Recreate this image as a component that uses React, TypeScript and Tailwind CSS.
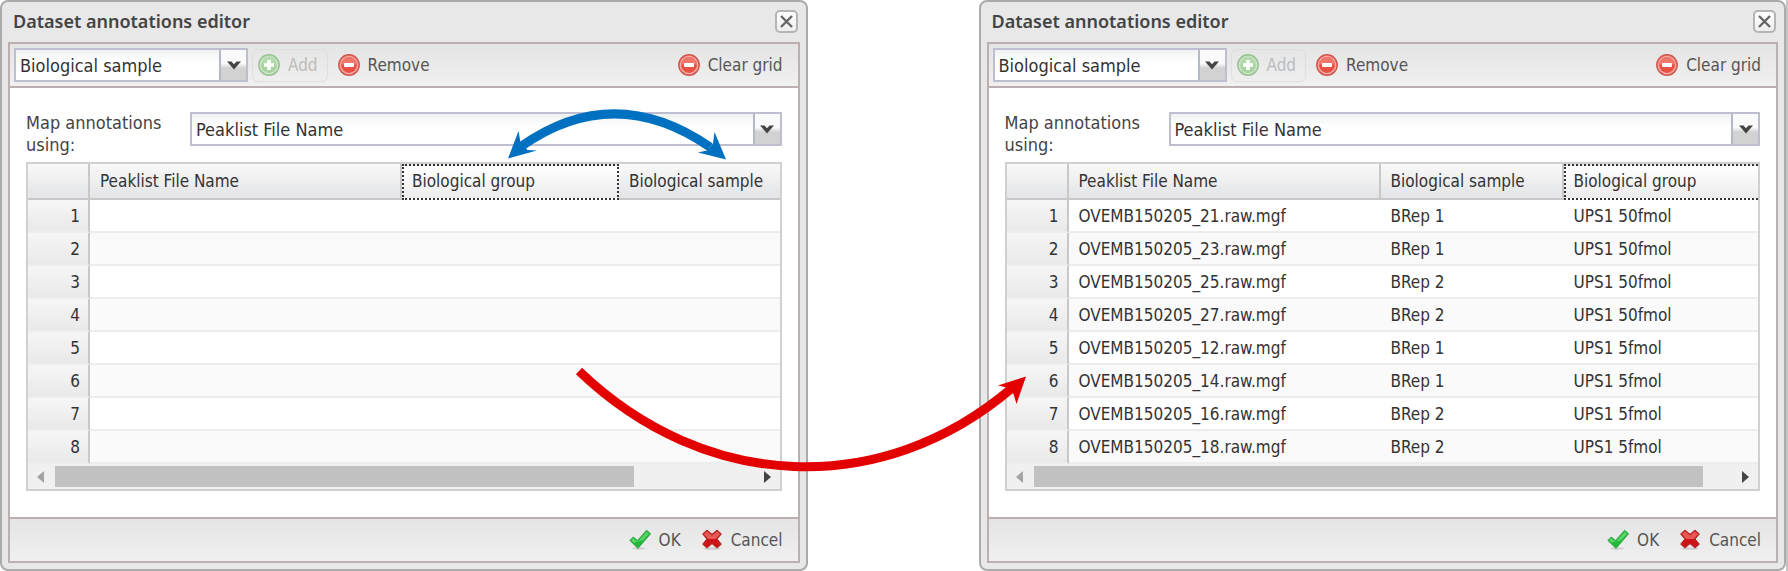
import type { ReactNode } from "react";

type Column = { title: string; width: string; focused?: boolean };
type GridRow = [string, string, string];

function AddIcon() {
  return (
    <svg width="22" height="22" viewBox="0 0 22 22" aria-hidden="true">
      <circle cx="11" cy="11" r="10.3" fill="#a9d2a4" stroke="#94c291" strokeWidth="1.2" />
      <circle cx="11" cy="11" r="8.6" fill="#a8d3a0" stroke="#cbe6c6" strokeWidth="1.4" />
      <path d="M2.8 10.5a8.2 8.2 0 0 1 16.4 0z" fill="#b9dcb3" opacity="0.7" />
      <path d="M9.2 6h3.6v3.2H16v3.6h-3.2V16H9.2v-3.2H6V9.2h3.2z" fill="#fff" />
    </svg>
  );
}

function RemoveIcon() {
  return (
    <svg width="22" height="22" viewBox="0 0 22 22" aria-hidden="true">
      <circle cx="11" cy="11" r="10.3" fill="#e0645a" stroke="#d0564d" strokeWidth="1.2" />
      <circle cx="11" cy="11" r="8.6" fill="#ea4f44" stroke="#f5b0a9" strokeWidth="1.3" />
      <path d="M3.2 10.5a7.8 7.8 0 0 1 15.6 0z" fill="#f28277" opacity="0.75" />
      <rect x="6" y="9" width="10" height="4" rx="0.8" fill="#fff" />
    </svg>
  );
}

function CheckIcon() {
  return (
    <svg width="22" height="22" viewBox="0 0 22 22" aria-hidden="true">
      <ellipse cx="10" cy="19.5" rx="7" ry="1.2" fill="#000" opacity="0.13" />
      <path d="M0.8 11.4 4.2 8l4.4 3.4L17.6 1.2l4 3.6L9 19.4z" fill="#22b83a" stroke="#2fa03d" strokeWidth="0.8" strokeLinejoin="round" />
      <path d="M2.2 11.3 4.2 9.3l4.5 3.6 9-10.2 2.2 2L14 11.3c-4 1.2-7 2.2-9.5 2.2z" fill="#6fdc77" opacity="0.75" />
    </svg>
  );
}

function CrossIcon() {
  return (
    <svg width="22" height="22" viewBox="0 0 22 22" aria-hidden="true">
      <ellipse cx="11" cy="19.6" rx="9" ry="1.2" fill="#000" opacity="0.13" />
      <path d="M6 1l5 4.200L16 1l4.400 3.900-4.200 5.100 4.200 5.200-4.400 3.900-5-4.400-5 4.400-4.400-3.900L5.800 10 1.600 4.900z" fill="#cc1416" stroke="#a82424" strokeWidth="0.9" strokeLinejoin="round" />
      <path d="M6 2.300l5 4.300 5-4.300 3.100 2.700-4.200 5H7.100l-4.200-5z" fill="#ee6a66" opacity="0.8" />
    </svg>
  );
}

function ComboBox({ id, value, className, label }: { id: string; value: string; className: string; label?: string }) {
  return (
    <div className={"relative flex h-[34px] border-2 border-[#bdbfd0] bg-white " + className}>
      <select
        id={id}
        aria-label={label}
        className="min-w-0 flex-1 appearance-none bg-linear-to-b from-[#eef1f1] to-white to-40% pt-[2px] pl-[4px] text-[18px] leading-7 text-[#333] outline-none"
      >
        <option>{value}</option>
      </select>
      <span className="pointer-events-none flex w-[27px] items-center justify-center border-l-2 border-[#b5b8c8] bg-linear-to-b from-[#fafafa] from-45% to-[#d2d2d2] to-60%">
        <svg width="14" height="9" viewBox="0 0 14 9" aria-hidden="true">
          <path d="M0 0.500h4.500L7 3.300 9.500 0.500H14L7 8.500z" fill="#444" />
        </svg>
      </span>
    </div>
  );
}

function ToolButton({ icon, children, disabled }: { icon: ReactNode; children: ReactNode; disabled?: boolean }) {
  return (
    <button
      type="button"
      disabled={disabled}
      className="flex h-[33px] items-center gap-2 rounded-md border border-transparent px-[5px] text-[17px] leading-6 text-[#555] disabled:border-[#dedede] disabled:text-[#bcbcbc]"
    >
      {icon}
      <span className="pr-1">{children}</span>
    </button>
  );
}

function AnnotationsGrid({ columns, rows, thumb }: { columns: Column[]; rows: GridRow[]; thumb: string }) {
  return (
    <div className="overflow-hidden border-2 border-[#d0d0d0]">
      <table className="w-full table-fixed border-separate border-spacing-0 text-[17px] leading-6">
        <colgroup>
          <col className="w-[62px]" />
          {columns.map((c) => (
            <col key={c.title} className={c.width} />
          ))}
        </colgroup>
        <thead>
          <tr className="h-[36px]">
            <th aria-label="Row number" className="border-r-2 border-b-2 border-[#c8c8c8] bg-linear-to-b from-[#f9f9f9] to-[#e3e4e6] p-0" />
            {columns.map((c) => (
              <th
                key={c.title}
                className={
                  "p-0 text-left font-normal whitespace-nowrap text-[#333] " +
                  (c.focused
                    ? "border-2 border-dotted border-[#333] bg-linear-to-b from-white to-[#ececee] pb-[2px] pl-[8px] last:border-r-0"
                    : "border-r-2 border-b-2 border-[#c8c8c8] bg-linear-to-b from-[#f9f9f9] to-[#e3e4e6] pl-[10px] last:border-r-0")
                }
              >
                {c.title}
              </th>
            ))}
          </tr>
        </thead>
        <tbody>
          {rows.map((row, i) => (
            <tr key={i} className="h-[33px] text-[#333] even:bg-[#fafafa]">
              <td className="border-r-2 border-b-2 border-r-[#c8c8c8] border-b-[#ededed] bg-linear-to-b from-[#f6f6f6] to-[#e9e9e9] p-0 pr-2 text-right">
                {i + 1}
              </td>
              {row.map((cell, j) => (
                <td key={j} className="border-b-2 border-[#ededed] p-0 pl-[10px] whitespace-nowrap">
                  {cell}
                </td>
              ))}
            </tr>
          ))}
        </tbody>
      </table>
      <div className="flex h-[25px] items-center bg-[#f0f0f0] px-[9px]">
        <button type="button" aria-label="Scroll left" className="flex h-full w-[18px] items-center">
          <svg width="7" height="12" viewBox="0 0 7 12" aria-hidden="true">
            <path d="M7 0v12L0 6z" fill="#a3a3a3" />
          </svg>
        </button>
        <div className="h-[21px] flex-1">
          <div className={"h-full bg-[#c1c1c1] " + thumb} />
        </div>
        <button type="button" aria-label="Scroll right" className="flex h-full w-[18px] items-center justify-end">
          <svg width="7" height="12" viewBox="0 0 7 12" aria-hidden="true">
            <path d="M0 0v12l7-6z" fill="#444" />
          </svg>
        </button>
      </div>
    </div>
  );
}

function EditorWindow({ id, columns, rows, thumb }: { id: string; columns: Column[]; rows: GridRow[]; thumb: string }) {
  return (
    <section
      aria-labelledby={id + "-title"}
      className="flex min-w-0 flex-1 flex-col rounded-lg border-2 border-[#ababab] bg-[#e8e8e8] px-[6px] pb-[6px]"
    >
      <header className="flex h-[40px] items-center justify-between pr-[2px] pb-[2px] pl-[5px]">
        <h2 id={id + "-title"} className="font-['Noto_Sans',sans-serif] text-[18px] leading-6 font-semibold text-[#444]">
          Dataset annotations editor
        </h2>
        <button
          type="button"
          aria-label="Close"
          className="flex size-[23px] items-center justify-center rounded-[5px] border-2 border-[#b4b4b4] bg-linear-to-b from-white to-[#eeeeee]"
        >
          <svg width="13" height="13" viewBox="0 0 13 13" aria-hidden="true">
            <path d="M1 1l11 11M12 1L1 12" stroke="#666" strokeWidth="2.4" />
          </svg>
        </button>
      </header>

      <div className="flex flex-col border-2 border-[#bbb0af]">
        <div className="flex h-[44px] items-center border-b-2 border-[#bbb0af] bg-linear-to-b from-[#e4e4e4] to-[#f0f0f0] pr-[5px] pl-1">
          <ComboBox id={id + "-type"} label="Annotation type" value="Biological sample" className="w-[234px]" />
          <div className="ml-1 flex flex-1 items-center gap-1">
            <ToolButton icon={<AddIcon />} disabled>
              Add
            </ToolButton>
            <ToolButton icon={<RemoveIcon />}>Remove</ToolButton>
            <div className="ml-auto">
              <ToolButton icon={<RemoveIcon />}>Clear grid</ToolButton>
            </div>
          </div>
        </div>

        <div className="bg-white px-[16px] pt-[24px] pb-[26px]">
          <div className="flex h-[50px] items-start">
            <label htmlFor={id + "-map"} className="w-[164px] pr-4 text-[18px] leading-[22px] text-[#444]">
              Map annotations using:
            </label>
            <ComboBox id={id + "-map"} value="Peaklist File Name" className="flex-1" />
          </div>
          <AnnotationsGrid columns={columns} rows={rows} thumb={thumb} />
        </div>

        <footer className="flex h-[44px] items-center justify-end gap-1 border-t-2 border-[#bbb0af] bg-linear-to-b from-[#e4e4e4] to-[#f0f0f0] pr-[5px]">
          <ToolButton icon={<CheckIcon />}>OK</ToolButton>
          <ToolButton icon={<CrossIcon />}>Cancel</ToolButton>
        </footer>
      </div>
    </section>
  );
}

const beforeColumns: Column[] = [
  { title: "Peaklist File Name", width: "w-[312px]" },
  { title: "Biological group", width: "w-[217px]", focused: true },
  { title: "Biological sample", width: "w-auto" },
];

const afterColumns: Column[] = [
  { title: "Peaklist File Name", width: "w-[312px]" },
  { title: "Biological sample", width: "w-[183px]" },
  { title: "Biological group", width: "w-auto", focused: true },
];

const emptyRows: GridRow[] = Array.from({ length: 8 }, () => ["", "", ""]);

const filledRows: GridRow[] = [
  ["OVEMB150205_21.raw.mgf", "BRep 1", "UPS1 50fmol"],
  ["OVEMB150205_23.raw.mgf", "BRep 1", "UPS1 50fmol"],
  ["OVEMB150205_25.raw.mgf", "BRep 2", "UPS1 50fmol"],
  ["OVEMB150205_27.raw.mgf", "BRep 2", "UPS1 50fmol"],
  ["OVEMB150205_12.raw.mgf", "BRep 1", "UPS1 5fmol"],
  ["OVEMB150205_14.raw.mgf", "BRep 1", "UPS1 5fmol"],
  ["OVEMB150205_16.raw.mgf", "BRep 2", "UPS1 5fmol"],
  ["OVEMB150205_18.raw.mgf", "BRep 2", "UPS1 5fmol"],
];

export default function App() {
  return (
    <main className="relative flex bg-white font-['DejaVu_Sans_Condensed','DejaVu_Sans',sans-serif]">
      <EditorWindow id="before" columns={beforeColumns} rows={emptyRows} thumb="w-[83%]" />
      <div className="w-[171px] shrink-0" />
      <EditorWindow id="after" columns={afterColumns} rows={filledRows} thumb="w-[96%]" />
      <div className="w-[2px] shrink-0 bg-[#c4c4c4]" />

      {/* Arrows linking the swapped columns and the two windows */}
      <svg
        className="pointer-events-none absolute inset-0 h-full w-full"
        viewBox="0 0 1788 571"
        preserveAspectRatio="none"
        aria-hidden="true"
      >
        <path d="M521 146.5Q614 81 710 147" fill="none" stroke="#0070c0" strokeWidth="9" />
        <path d="M508 158.500 518.500 131l2 11.500 7 7.500 9.500.500z" fill="#0070c0" />
        <path d="M726 159.500 714.500 132l-1.500 11.500-6 7-9 2z" fill="#0070c0" />
        <path d="M579 371C705 492 882 499 1012 388" fill="none" stroke="#e30000" strokeWidth="9" />
        <path d="M1026 376.500 998 385.500l11 2.500 4.500 6 3 10z" fill="#e30000" />
      </svg>
    </main>
  );
}
